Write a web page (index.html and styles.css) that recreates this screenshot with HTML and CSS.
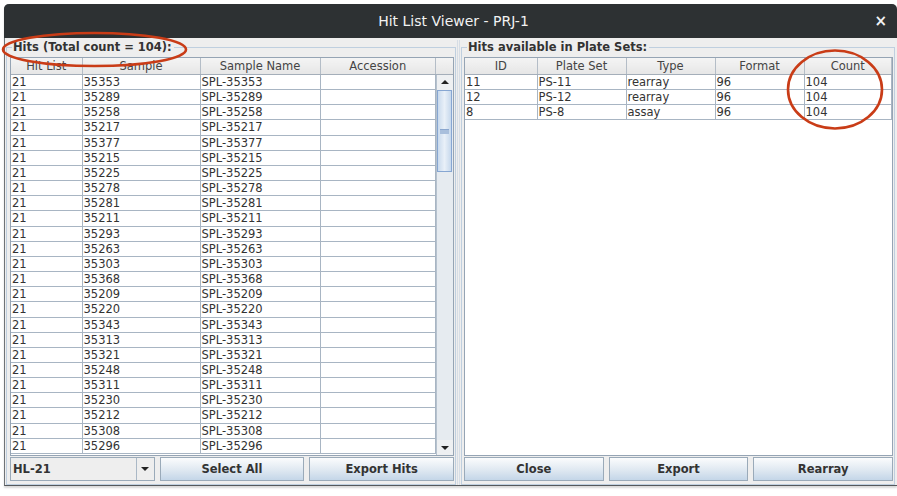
FILE: index.html
```html
<!DOCTYPE html>
<html>
<head>
<meta charset="utf-8">
<link rel="stylesheet" href="styles.css">
</head>
<body>
<div class="window">
  <div class="titlebar">
    <span class="title">Hit List Viewer - PRJ-1</span>
    <span class="close">×</span>
  </div>
  <div class="content">
    <fieldset class="panel left">
      <legend>Hits (Total count = 104):</legend>
      <div class="scrollpane">
        <table class="grid head">
          <colgroup><col style="width:71px"><col style="width:118px"><col style="width:120px"><col></colgroup>
          <tr><th>Hit List</th><th>Sample</th><th>Sample Name</th><th>Accession</th></tr>
        </table>
        <div class="corner"></div>
        <div class="body">
          <table class="grid rows" id="hits">
            <colgroup><col style="width:71px"><col style="width:118px"><col style="width:120px"><col></colgroup>
            <tbody></tbody>
          </table>
        </div>
        <div class="vscroll">
          <div class="arrow up"></div>
          <div class="thumb"><div class="grip"></div></div>
          <div class="track"></div>
          <div class="arrow down"></div>
        </div>
      </div>
      <div class="controls">
        <div class="combo"><span class="combo-text">HL-21</span><span class="combo-btn"></span></div>
        <button class="btn">Select All</button>
        <button class="btn">Export Hits</button>
      </div>
    </fieldset>
    <div class="splitter"></div>
    <fieldset class="panel right">
      <legend>Hits available in Plate Sets:</legend>
      <div class="scrollpane noscroll">
        <table class="grid head">
          <colgroup><col style="width:72px"><col style="width:89px"><col style="width:89px"><col style="width:89px"><col></colgroup>
          <tr><th>ID</th><th>Plate Set</th><th>Type</th><th>Format</th><th>Count</th></tr>
        </table>
        <div class="body white">
          <table class="grid rows">
            <colgroup><col style="width:72px"><col style="width:89px"><col style="width:89px"><col style="width:89px"><col></colgroup>
            <tr><td>11</td><td>PS-11</td><td>rearray</td><td>96</td><td>104</td></tr>
            <tr><td>12</td><td>PS-12</td><td>rearray</td><td>96</td><td>104</td></tr>
            <tr><td>8</td><td>PS-8</td><td>assay</td><td>96</td><td>104</td></tr>
          </table>
        </div>
      </div>
      <div class="controls">
        <button class="btn">Close</button>
        <button class="btn">Export</button>
        <button class="btn">Rearray</button>
      </div>
    </fieldset>
  </div>
</div>
<svg class="marks" width="897" height="496" viewBox="0 0 897 496">
  <ellipse cx="94.5" cy="49.5" rx="91.5" ry="16.5" fill="none" stroke="#c93c17" stroke-width="2.6"/>
  <ellipse cx="835" cy="89.5" rx="47" ry="39" fill="none" stroke="#c93c17" stroke-width="2.6"/>
</svg>
<script>
var ids=[35353,35289,35258,35217,35377,35215,35225,35278,35281,35211,35293,35263,35303,35368,35209,35220,35343,35313,35321,35248,35311,35230,35212,35308,35296];
var tb=document.querySelector('#hits tbody');
ids.forEach(function(n){var tr=document.createElement('tr');tr.innerHTML='<td>21</td><td>'+n+'</td><td>SPL-'+n+'</td><td></td>';tb.appendChild(tr);});
</script>
</body>
</html>
```
FILE: styles.css
```css
html, body {
  margin: 0;
  padding: 0;
  background: #ffffff;
  width: 897px;
  height: 496px;
  overflow: hidden;
  font-family: "DejaVu Sans", sans-serif;
}
.window {
  margin: 4px 0 0 4px;
  width: 893px;
  height: 482px;
  background: #eeeeee;
  border-radius: 5px 5px 0 0;
  border-left: 1px solid #6f7377;
  border-bottom: 1px solid #55595c;
  box-sizing: border-box;
  display: flex;
  flex-direction: column;
  box-shadow: 0 2px 2px rgba(0,0,0,0.15);
}
.titlebar {
  height: 34px;
  flex: none;
  background: #2d3133;
  border-radius: 5px 5px 0 0;
  margin-left: -1px;
  color: #f2f2f2;
  display: flex;
  align-items: center;
  justify-content: center;
  position: relative;
  font-size: 14px;
}
.title { margin-left: 6px; }
.close {
  position: absolute;
  right: 10px;
  top: 9px;
  font-size: 15px;
  font-weight: bold;
  line-height: 16px;
}
.content {
  flex: 1;
  display: flex;
  padding: 2px 0 0 1px;
  min-height: 0;
}
.panel {
  margin: 0;
  border: 1px solid #bfcfdf;
  padding: 3px 1px 3px 3px;
  display: flex;
  flex-direction: column;
  min-width: 0;
}
.panel legend {
  font-size: 11.5px;
  font-weight: bold;
  color: #333333;
  padding: 0 2px 0 1px;
  margin-left: 2px;
  line-height: 14px;
}
.left { width: 450px; box-sizing: border-box; }
.right { width: 434px; box-sizing: border-box; padding-left: 2px; }
.right legend { margin-left: 3px; }
.splitter {
  width: 3px;
  margin: 0 1px;
  border-left: 1px solid #d6dde5;
  border-right: 1px solid #d6dde5;
  box-sizing: border-box;
}
.scrollpane {
  flex: 1;
  display: grid;
  grid-template-columns: 1fr 17px;
  grid-template-rows: 17px 1fr;
  border: 1px solid #95a4b4;
  background: #ffffff;
  min-height: 0;
}
.noscroll { grid-template-columns: 1fr; }
.grid {
  border-collapse: collapse;
  table-layout: fixed;
  width: 100%;
  font-size: 11.5px;
  color: #333333;
}
.head th {
  font-weight: normal;
  height: 16px;
  padding: 0;
  line-height: 15px;
  text-align: center;
  background: linear-gradient(#f4f4f4, #e6e6e6);
  border-right: 1px solid #b4bdc7;
  border-bottom: 1px solid #a4aeb9;
  color: #444444;
}
.corner {
  background: linear-gradient(#f4f4f4, #e6e6e6);
  border-bottom: 1px solid #a4aeb9;
}
.body { overflow: hidden; }
.rows td {
  padding: 0 0 0 1px;
  height: 14.15px;
  line-height: 14.15px;
  border-right: 1px solid #a8b5c3;
  border-bottom: 1px solid #a8b5c3;
  white-space: nowrap;
  overflow: hidden;
}
.vscroll {
  display: flex;
  flex-direction: column;
  background: #e4eaf0;
  border-left: 1px solid #b6c2ce;
}
.arrow {
  height: 15px;
  flex: none;
  background: #eef0f2;
  position: relative;
}
.arrow::after {
  content: "";
  position: absolute;
  left: 4px;
  top: 5px;
  border-left: 4px solid transparent;
  border-right: 4px solid transparent;
}
.up::after { border-bottom: 4px solid #222222; }
.down::after { border-top: 4px solid #222222; top: 6px; }
.thumb {
  height: 80px;
  flex: none;
  margin: 0 1px 0 0;
  background: linear-gradient(90deg, #c9daed, #e9f0f8 50%, #c6d8ec);
  border: 1px solid #86a6d2;
  display: flex;
  align-items: center;
  justify-content: center;
}
.grip {
  width: 9px;
  height: 4px;
  background: #a9bfdc;
  border-top: 1px solid #8ba7cf;
}
.track { flex: 1; background: #e6ebf0; }
.controls {
  display: grid;
  grid-template-columns: 1fr 1fr 1fr;
  gap: 5px;
  margin-top: 1px;
  height: 24px;
  flex: none;
}
.btn {
  font-family: "DejaVu Sans", sans-serif;
  font-size: 11.5px;
  font-weight: bold;
  color: #333333;
  border: 1px solid #9aaab9;
  background: linear-gradient(#fbfcfd, #dfe8f1 55%, #c4d6e8);
  padding: 0;
  margin: 0;
  height: 24px;
}
.combo {
  display: flex;
  border: 1px solid #9aaab9;
  background: #eeeeee;
  box-sizing: border-box;
  height: 24px;
}
.combo-text {
  flex: 1;
  font-size: 11.5px;
  font-weight: bold;
  color: #333333;
  line-height: 22px;
  padding-left: 2px;
}
.combo-btn {
  width: 17px;
  border-left: 1px solid #aab8c6;
  position: relative;
  background: #eeeeee;
}
.combo-btn::after {
  content: "";
  position: absolute;
  left: 4px;
  top: 9px;
  border-left: 4px solid transparent;
  border-right: 4px solid transparent;
  border-top: 4px solid #222222;
}
.marks {
  position: absolute;
  left: 0;
  top: 0;
  pointer-events: none;
}
```
